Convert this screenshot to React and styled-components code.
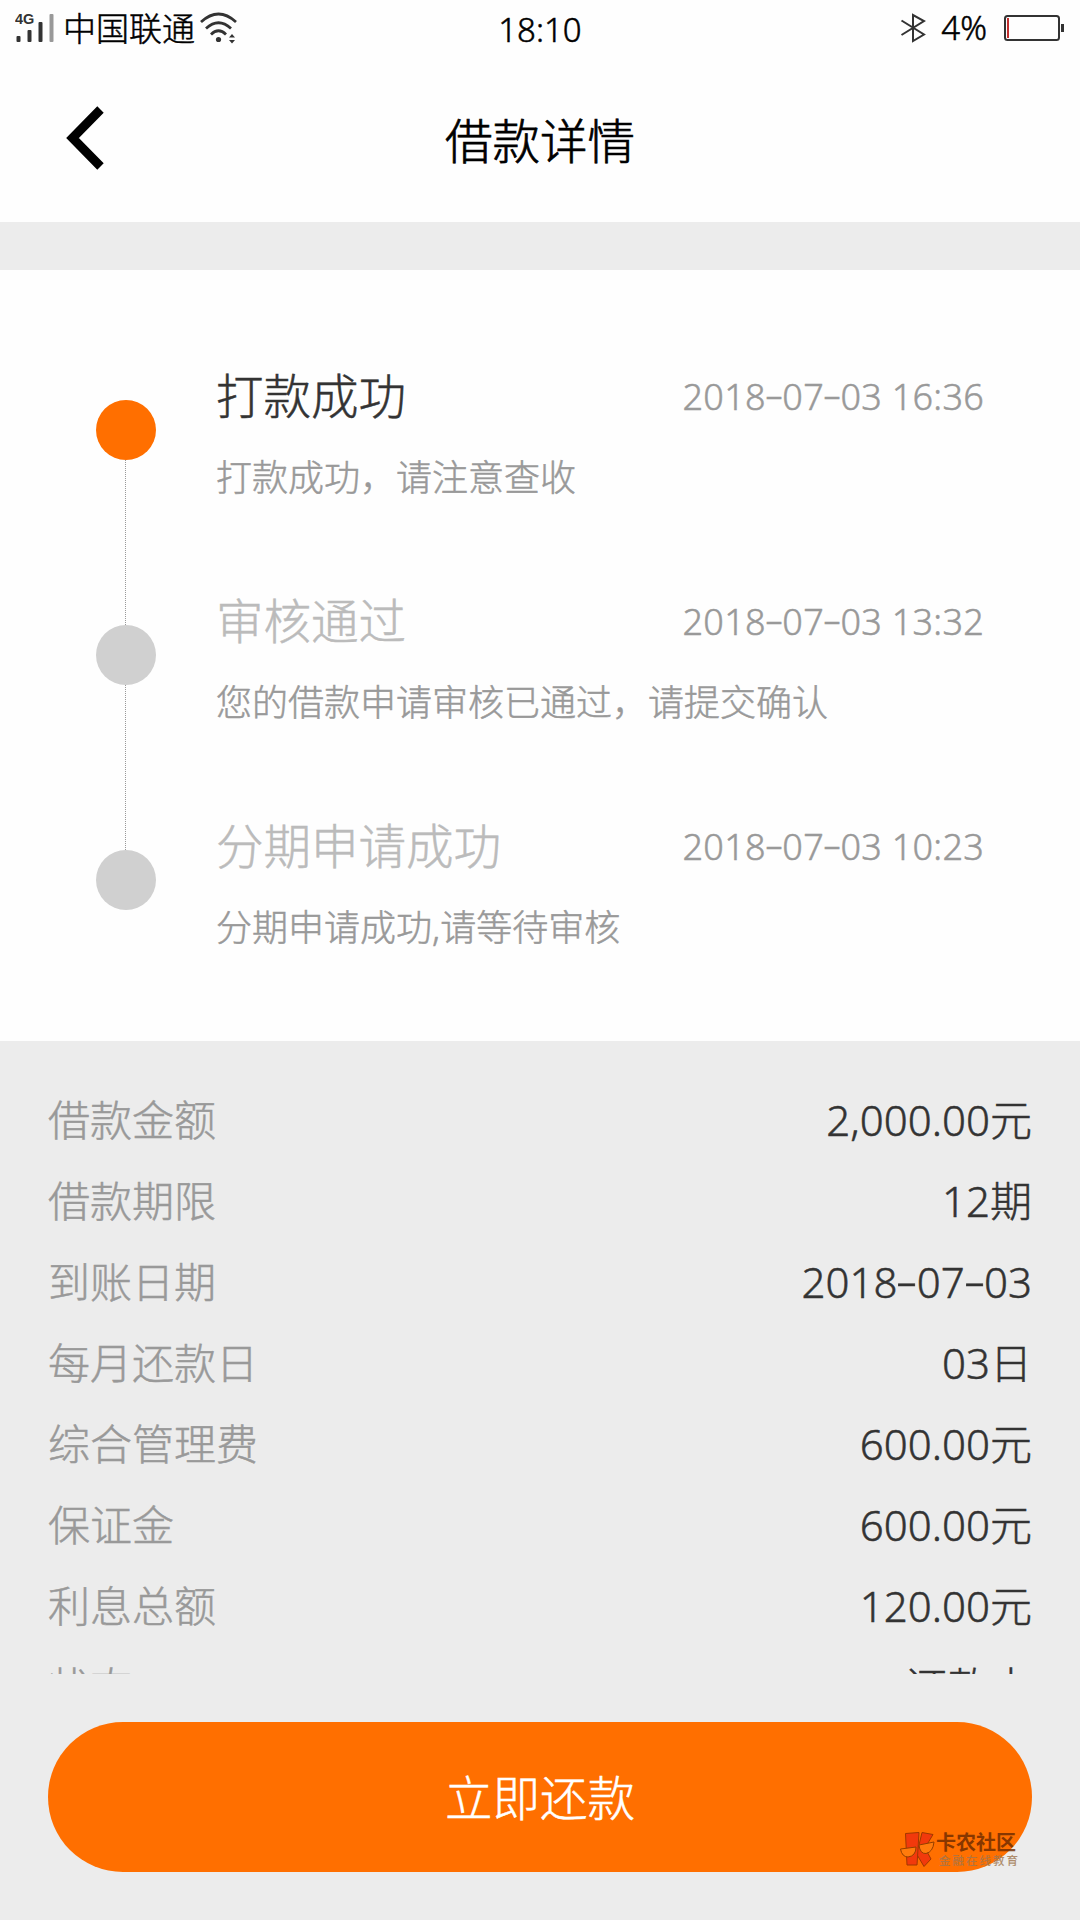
import styled, { createGlobalStyle } from "styled-components";

const GlobalStyle = createGlobalStyle`
  * {
    box-sizing: border-box;
  }

  body {
    margin: 0;
    background-color: #ececec;
    font-family: "Noto Sans", "Noto Sans CJK SC", sans-serif;
    font-weight: 300;
    -webkit-text-stroke: 0.5px currentColor;
  }
`;

const Page = styled.div`
  display: flex;
  flex-direction: column;
  width: 1080px;
  height: 1920px;
  overflow: hidden;
  background-color: #ececec;
`;

const StatusBar = styled.div`
  display: grid;
  grid-template-columns: 1fr auto 1fr;
  align-items: center;
  height: 56px;
  padding: 0 16px 4px 15px;
  background-color: #fefefe;
  color: #000;
  font-size: 33px;
  line-height: 52px;
`;

const StatusGroup = styled.div`
  display: flex;
  align-items: center;
  justify-content: ${(props) => (props.$end ? "flex-end" : "flex-start")};
  height: 52px;

  svg {
    display: block;
    flex: none;
  }
`;

const Carrier = styled.span`
  margin: 0 5px 0 9px;
  padding-top: 1px;
`;

const Clock = styled.span`
  padding: 4px 0 0 1px;
`;

const Percent = styled.span`
  margin: 0 17px 0 15px;
`;

const Header = styled.header`
  display: grid;
  grid-template-columns: 200px 1fr 200px;
  align-items: center;
  height: 166px;
  background-color: #fefefe;
`;

const BackButton = styled.button`
  height: 166px;
  padding: 0 0 2px 66px;
  border: none;
  background: none;
  text-align: left;

  svg {
    display: block;
  }
`;

const Title = styled.h1`
  margin: 0;
  padding-top: 3px;
  color: #000;
  font-size: 47.5px;
  font-weight: 300;
  line-height: 72px;
  text-align: center;
  -webkit-text-stroke-width: 0.7px;
`;

const Timeline = styled.section`
  height: 771px;
  margin-top: 48px;
  padding: 90px 96px 0;
  background-color: #fefefe;
`;

const Step = styled.div`
  display: grid;
  grid-template-columns: 60px 1fr;
  column-gap: 60px;
  height: 225px;
`;

const Rail = styled.div`
  display: flex;
  flex-direction: column;
  align-items: center;
  height: 225px;
  margin-top: 40px;
`;

const Dot = styled.div`
  flex: none;
  width: 60px;
  height: 60px;
  border-radius: 50%;
  background-color: ${(props) => (props.$active ? "#ff6f00" : "#d0d0d0")};
`;

const Line = styled.div`
  flex: 1;
  width: 1px;
  margin-right: 1px;
  background: repeating-linear-gradient(#999 0 1px, #fefefe 1px 2px);
`;

const StepHead = styled.div`
  display: flex;
  justify-content: space-between;
  align-items: center;
  height: 72px;
`;

const StepTitle = styled.span`
  padding-bottom: 6px;
  color: ${(props) => (props.$active ? "#333" : "#bbb")};
  font-size: 47.5px;
`;

const StepTime = styled.span`
  color: #999;
  font-size: 36px;
  letter-spacing: 0.25px;
`;

const StepText = styled.p`
  margin: 19px 0 0;
  color: #999;
  font-size: 36px;
  line-height: 54px;
`;

const Details = styled.dl`
  height: 633px;
  margin: 0;
  padding: 38px 48px 0;
  overflow: hidden;
`;

const Row = styled.div`
  display: flex;
  justify-content: space-between;
  align-items: center;
  height: 81px;
  font-size: 42px;
  line-height: 80px;
`;

const Label = styled.dt`
  color: #999;
`;

const Value = styled.dd`
  margin: 0;
  color: #333;
`;

const Hyphen = styled.span`
  display: inline-block;
  width: 0.46em;
  text-align: center;
  transform: translateY(-0.05em) scaleX(1.6);
`;

const Footer = styled.footer`
  position: relative;
  padding: 48px 48px 0;
`;

const RepayButton = styled.button`
  display: block;
  width: 984px;
  height: 150px;
  padding: 0 0 3px;
  border: none;
  border-radius: 75px;
  background-color: #ff6f00;
  color: #fff;
  font-family: inherit;
  font-size: 47.5px;
  font-weight: 300;
  -webkit-text-stroke: 0.5px currentColor;
`;

const Watermark = styled.div`
  position: absolute;
  left: 899px;
  top: 157px;
  display: flex;
  opacity: 0.8;
  -webkit-text-stroke-width: 0;
`;

const WatermarkName = styled.div`
  color: #6a2a00;
  font-size: 20px;
  font-weight: 700;
  line-height: 24px;
  white-space: nowrap;
`;

const WatermarkNote = styled.div`
  padding-left: 3px;
  color: #a0764f;
  font-size: 11.5px;
  font-weight: 500;
  letter-spacing: 2px;
  line-height: 12px;
  white-space: nowrap;
`;

const steps = [
  {
    title: "打款成功",
    time: "2018-07-03 16:36",
    text: "打款成功，请注意查收",
    active: true,
  },
  {
    title: "审核通过",
    time: "2018-07-03 13:32",
    text: "您的借款申请审核已通过，请提交确认",
  },
  {
    title: "分期申请成功",
    time: "2018-07-03 10:23",
    text: "分期申请成功,请等待审核",
  },
];

const details = [
  ["借款金额", "2,000.00元"],
  ["借款期限", "12期"],
  ["到账日期", "2018-07-03"],
  ["每月还款日", "03日"],
  ["综合管理费", "600.00元"],
  ["保证金", "600.00元"],
  ["利息总额", "120.00元"],
  ["状态", "还款中"],
];

function DateText({ children }) {
  return children
    .split(/(-)/)
    .map((part, i) => (part === "-" ? <Hyphen key={i}>-</Hyphen> : part));
}

const NetworkText = styled.text`
  font-family: "Liberation Sans", sans-serif;
  font-size: 14.5px;
  font-weight: 700;
  fill: #333;
  -webkit-text-stroke-width: 0;
`;

function SignalIcon() {
  return (
    <svg width="39" height="32" viewBox="0 0 39 32">
      <NetworkText x="0" y="12">
        4G
      </NetworkText>
      <rect x="1.500" y="24" width="4" height="6" rx="1" fill="#333" />
      <rect x="12.500" y="18" width="4" height="12" rx="1" fill="#333" />
      <rect x="23.500" y="10" width="4" height="20" rx="1" fill="#333" />
      <rect x="34.500" y="2" width="4" height="28" rx="1" fill="#999" />
    </svg>
  );
}

function WifiIcon() {
  return (
    <svg width="38" height="32" viewBox="0 0 38 32" fill="none">
      <g stroke="#333" strokeWidth="2.8">
        <path d="M1 10Q18.500 -6 36 10" />
        <path d="M6 16.500Q18.500 5 31 16.500" />
        <path d="M11 22.500Q18.500 15 26 22.500" />
      </g>
      <circle cx="18.500" cy="27.500" r="2.600" fill="#333" />
      <path d="M29 25.500L32 22L35 25.500ZM29 28L32 31.500L35 28Z" fill="#333" />
    </svg>
  );
}

function BluetoothIcon() {
  return (
    <svg width="26" height="30" viewBox="0 0 26 30" fill="none">
      <path
        d="M1.500 7.500L24 21.500L13 28V2L24 8L1.500 22"
        stroke="#333"
        strokeWidth="2"
      />
    </svg>
  );
}

function BatteryIcon() {
  return (
    <svg width="60" height="28" viewBox="0 0 60 28" fill="none">
      <rect x="1" y="2" width="54" height="24" rx="2.500" stroke="#333" strokeWidth="2" />
      <rect x="3" y="4" width="2" height="20" fill="#c22f2f" />
      <rect x="57" y="10" width="3" height="8" fill="#333" />
    </svg>
  );
}

function BackIcon() {
  return (
    <svg width="40" height="64" viewBox="0 0 40 64" fill="none">
      <path d="M34.500 3.500L6.500 32L34.500 60.500" stroke="#000" strokeWidth="9" />
    </svg>
  );
}

function WatermarkLogo() {
  return (
    <svg width="37" height="37" viewBox="0 0 37 37">
      <g fill="#f02c10" stroke="#8a2a00" strokeWidth="1">
        <path d="M23 1.500L34 3.500L26 17L32 28L25 35.500L17 22L20 14Z" />
        <path d="M6.500 2.500L20 1.500L18 34L8 34Z" />
      </g>
      <g fill="#ff7e10" stroke="#7a3300" strokeWidth="1">
        <path d="M1.500 18L17 16Q17 25 9 26Q3 26 1.500 18Z" />
        <path d="M20 14L35 11Q34 21 27 22.500Q21 23 20 14Z" />
      </g>
    </svg>
  );
}

function App() {
  return (
    <>
      <GlobalStyle />
      <Page>
        <StatusBar>
          <StatusGroup>
            <SignalIcon />
            <Carrier>中国联通</Carrier>
            <WifiIcon />
          </StatusGroup>
          <Clock>18:10</Clock>
          <StatusGroup $end>
            <BluetoothIcon />
            <Percent>4%</Percent>
            <BatteryIcon />
          </StatusGroup>
        </StatusBar>

        <Header>
          <BackButton>
            <BackIcon />
          </BackButton>
          <Title>借款详情</Title>
        </Header>

        <Timeline>
          {steps.map((step, i) => (
            <Step key={step.title}>
              <Rail>
                <Dot $active={step.active} />
                {i < steps.length - 1 && <Line />}
              </Rail>
              <div>
                <StepHead>
                  <StepTitle $active={step.active}>{step.title}</StepTitle>
                  <StepTime>
                    <DateText>{step.time}</DateText>
                  </StepTime>
                </StepHead>
                <StepText>{step.text}</StepText>
              </div>
            </Step>
          ))}
        </Timeline>

        <Details>
          {details.map(([label, value]) => (
            <Row key={label}>
              <Label>{label}</Label>
              <Value>
                <DateText>{value}</DateText>
              </Value>
            </Row>
          ))}
        </Details>

        <Footer>
          <RepayButton>立即还款</RepayButton>
          <Watermark>
            <WatermarkLogo />
            <div>
              <WatermarkName>卡农社区</WatermarkName>
              <WatermarkNote>金融在线教育</WatermarkNote>
            </div>
          </Watermark>
        </Footer>
      </Page>
    </>
  );
}

export default App;
